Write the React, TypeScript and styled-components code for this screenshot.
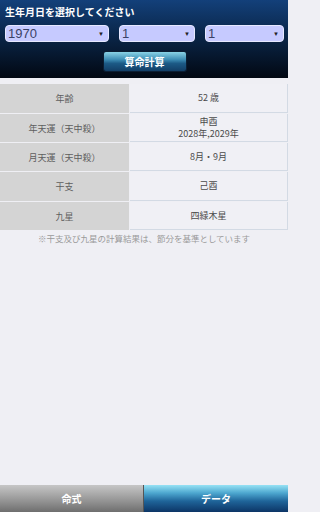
import React from 'react';
import styled, { createGlobalStyle } from 'styled-components';

const GlobalStyle = createGlobalStyle`
  html, body {
    margin: 0;
    padding: 0;
    background: #efeff4;
  }
  body {
    font-family: 'Noto Sans CJK JP', 'Noto Sans', sans-serif;
  }
`;

const Page = styled.div`
  width: 288px;
  height: 512px;
  display: flex;
  flex-direction: column;
  background: #efeff4;
  overflow: hidden;
`;

const Header = styled.div`
  height: 78px;
  box-sizing: border-box;
  padding: 5px 4px 0 5px;
  display: flex;
  flex-direction: column;
  background: linear-gradient(to bottom, #13407a 0%, #0a2649 45%, #020812 100%);
`;

const Title = styled.div`
  color: #ffffff;
  font-size: 10px;
  font-weight: 700;
  line-height: 14px;
  height: 14px;
`;

const SelectRow = styled.div`
  display: grid;
  grid-template-columns: 104px 1fr 79px;
  column-gap: 10px;
  margin-top: 6px;
`;

const Select = styled.div`
  height: 17px;
  box-sizing: border-box;
  border: 1px solid #e6e8ff;
  border-radius: 4px;
  background: #c6caff;
  display: flex;
  align-items: center;
  justify-content: space-between;
  padding: 0 4px 0 2px;
  color: #3b4266;
  font-family: 'Liberation Sans', 'Noto Sans', sans-serif;
  font-size: 13px;
`;

const Arrow = styled.span`
  font-size: 6px;
  color: #222;
  line-height: 1;
`;

const CalcButton = styled.div`
  align-self: center;
  margin-top: 10px;
  width: 82px;
  height: 19px;
  border-radius: 2px;
  background: linear-gradient(to bottom, #8ad3e6 0%, #3d8db4 40%, #1c5a86 60%, #123e66 100%);
  color: #ffffff;
  font-size: 10px;
  font-weight: 700;
  display: flex;
  align-items: center;
  justify-content: center;
  box-shadow: 0 0 0 1px #0b1e33;
`;

const Table = styled.div`
  margin-top: 6px;
  display: flex;
  flex-direction: column;
  gap: 1px;
`;

const Row = styled.div<{ h: number }>`
  display: grid;
  grid-template-columns: 129px 1fr;
  column-gap: 1px;
  height: ${(p) => p.h}px;
`;

const LabelCell = styled.div`
  background: #d4d4d4;
  color: #5e5e5e;
  font-size: 9px;
  display: flex;
  align-items: center;
  justify-content: center;
`;

const ValueCell = styled.div`
  background: #f0f0f5;
  border-bottom: 1px solid #d3dae4;
  border-right: 1px solid #d3dae4;
  color: #4a4a4a;
  font-size: 9px;
  line-height: 12px;
  display: flex;
  flex-direction: column;
  align-items: center;
  justify-content: center;
  text-align: center;
`;

const Note = styled.div`
  margin-top: 2px;
  text-align: center;
  color: #9a9a9a;
  font-size: 8.5px;
  line-height: 12px;
`;

const TabBar = styled.div`
  margin-top: auto;
  height: 27px;
  display: grid;
  grid-template-columns: 143px 1fr;
  column-gap: 1px;
  background: #555;
`;

const Tab = styled.div<{ active?: boolean }>`
  display: flex;
  align-items: center;
  justify-content: center;
  color: #ffffff;
  font-size: 10px;
  font-weight: 700;
  background: ${(p) =>
    p.active
      ? 'linear-gradient(to bottom, #96e2f4 0%, #4ca6cf 30%, #1f6499 60%, #0c3566 100%)'
      : 'linear-gradient(to bottom, #c6c6c6 0%, #a4a4a4 40%, #8a8a8a 70%, #6e6e6e 100%)'};
`;

const rows: { label: string; value: string[]; h: number }[] = [
  { label: '年齢', value: ['52 歳'], h: 29 },
  { label: '年天運（天中殺）', value: ['申酉', '2028年,2029年'], h: 28 },
  { label: '月天運（天中殺）', value: ['8月・9月'], h: 28 },
  { label: '干支', value: ['己酉'], h: 29 },
  { label: '九星', value: ['四緑木星'], h: 28 },
];

export default function App() {
  return (
    <Page>
      <GlobalStyle />
      <Header>
        <Title>生年月日を選択してください</Title>
        <SelectRow>
          <Select>
            <span>1970</span>
            <Arrow>▼</Arrow>
          </Select>
          <Select>
            <span>1</span>
            <Arrow>▼</Arrow>
          </Select>
          <Select>
            <span>1</span>
            <Arrow>▼</Arrow>
          </Select>
        </SelectRow>
        <CalcButton>算命計算</CalcButton>
      </Header>

      <Table>
        {rows.map((r) => (
          <Row key={r.label} h={r.h}>
            <LabelCell>{r.label}</LabelCell>
            <ValueCell>
              {r.value.map((v) => (
                <span key={v}>{v}</span>
              ))}
            </ValueCell>
          </Row>
        ))}
      </Table>
      <Note>※干支及び九星の計算結果は、節分を基準としています</Note>

      <TabBar>
        <Tab>命式</Tab>
        <Tab active>データ</Tab>
      </TabBar>
    </Page>
  );
}
